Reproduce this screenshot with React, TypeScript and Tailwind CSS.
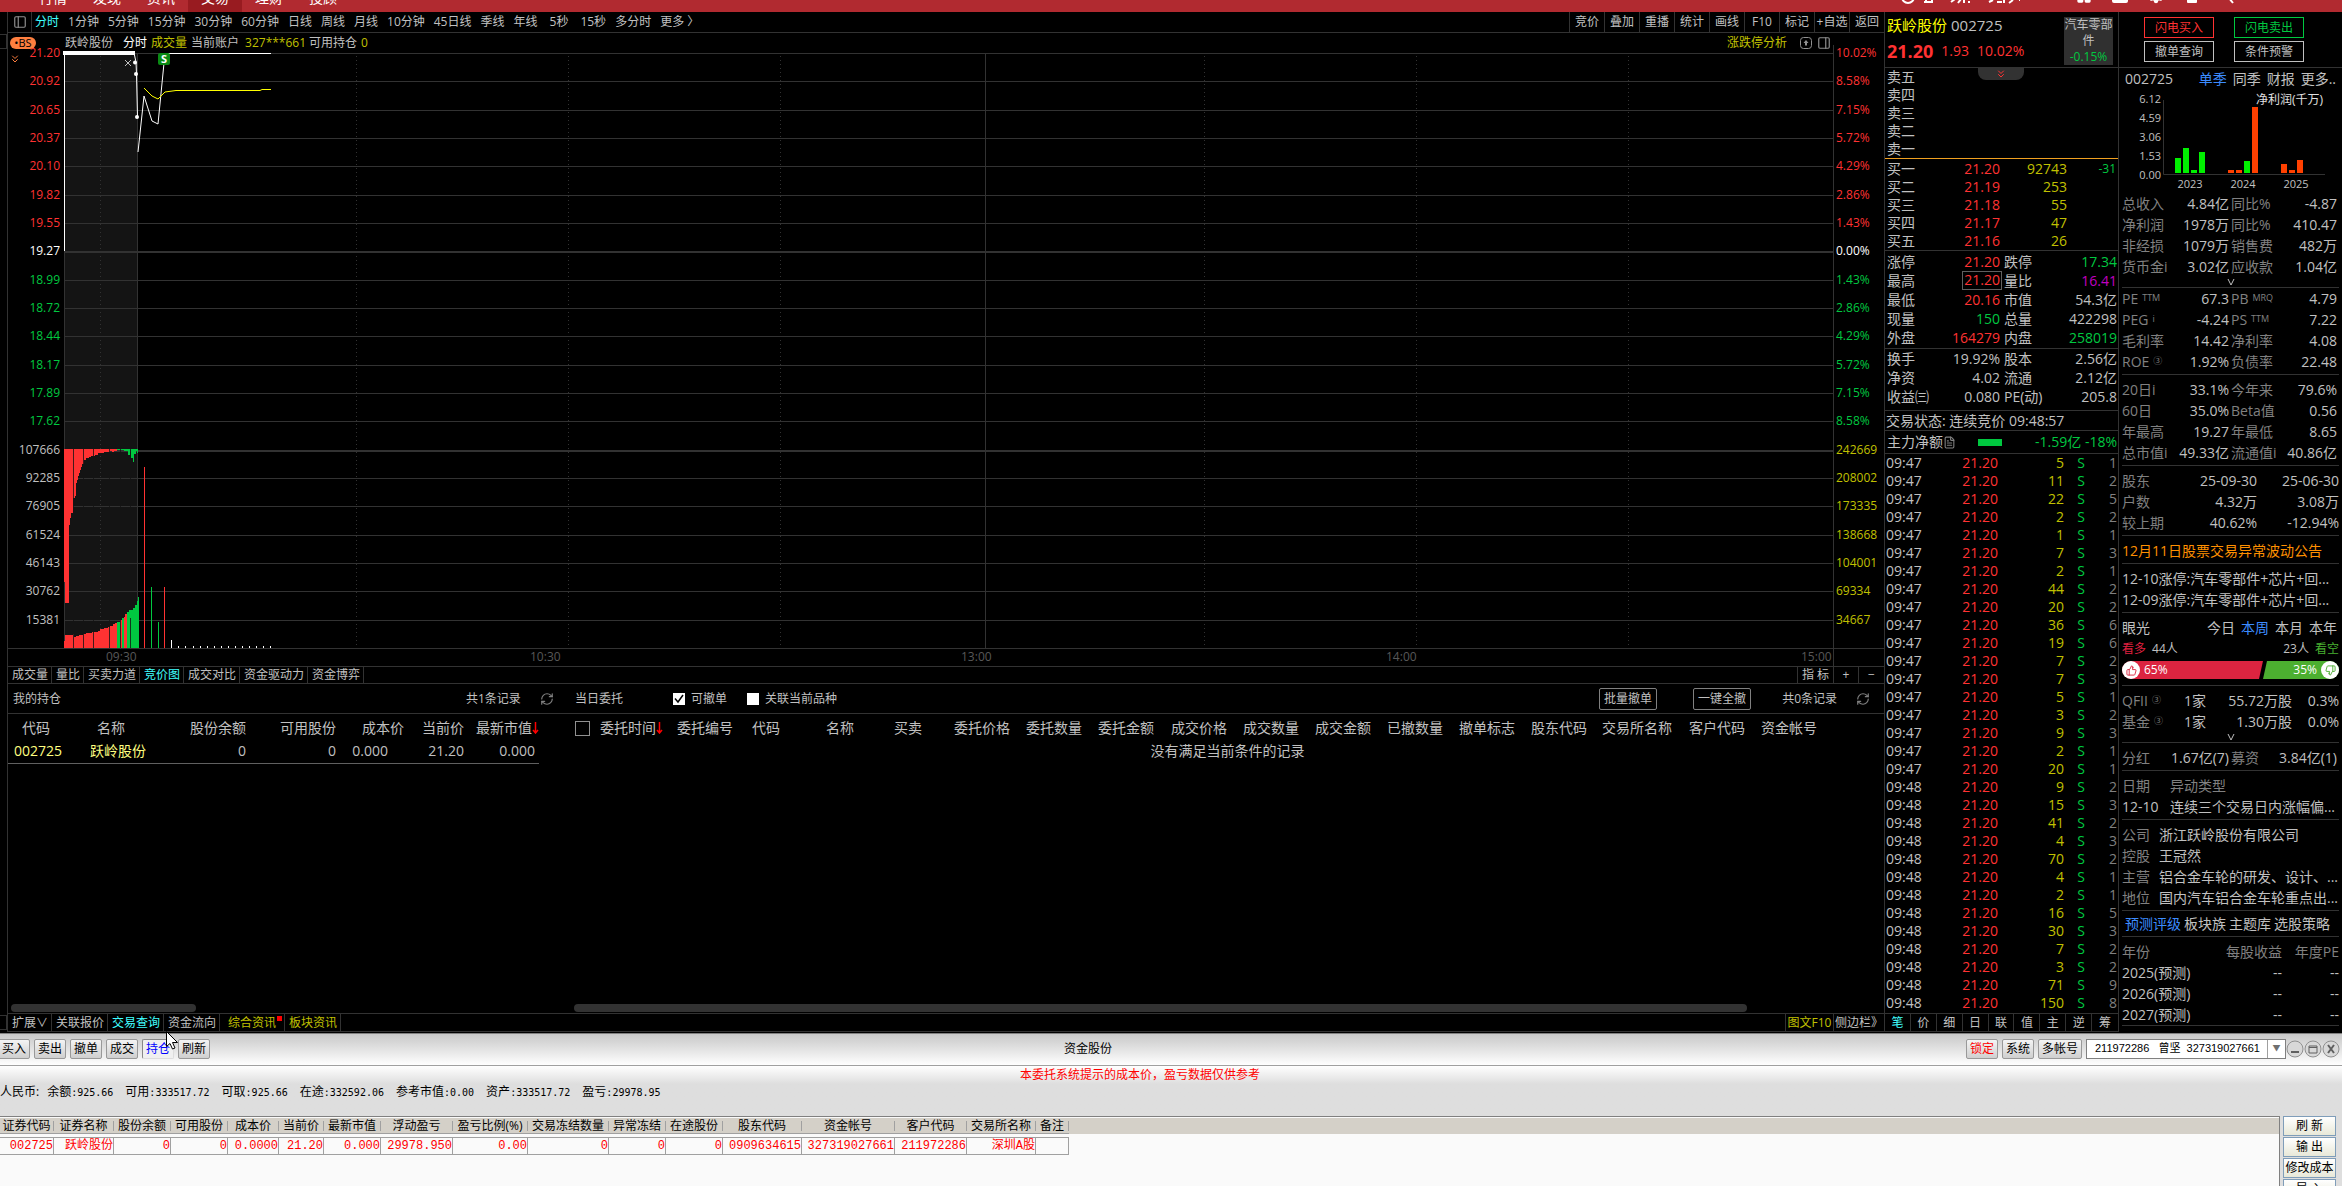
import { useState } from 'react';
import type { ReactNode } from 'react';
import { ChevronsDown, RefreshCw, ThumbsDown, ThumbsUp, LayoutGrid, Settings, PanelLeft, PanelRight, FileText } from 'lucide-react';
import { cva } from 'class-variance-authority';
import clsx from 'clsx';

const RED = '#ff3232';
const GREEN = '#00c840';

const tone = cva('', {
  variants: {
    c: {
      red: 'text-[#ff3232]',
      green: 'text-[#00c840]',
      yellow: 'text-[#c0c000]',
      purple: 'text-[#c000c0]',
      white: 'text-white',
      grey: 'text-[#808080]',
      plain: 'text-[#c0c0c0]',
    },
  },
});
type Tone = 'red' | 'green' | 'yellow' | 'purple' | 'white' | 'grey' | 'plain';

const menus = ['行情', '发现', '资讯', '交易', '理财', '投顾'];
const periods = ['分时', '1分钟', '5分钟', '15分钟', '30分钟', '60分钟', '日线', '周线', '月线', '10分钟', '45日线', '季线', '年线', '5秒', '15秒', '多分时', '更多 〉'];
const tools = ['竞价', '叠加', '重播', '统计', '画线', 'F10', '标记', '+自选', '返回'];

const priceAxis = ['21.20', '20.92', '20.65', '20.37', '20.10', '19.82', '19.55', '19.27', '18.99', '18.72', '18.44', '18.17', '17.89', '17.62'];
const auctionAxis = ['107666', '92285', '76905', '61524', '46143', '30762', '15381', ''];
const percentAxis = ['10.02%', '8.58%', '7.15%', '5.72%', '4.29%', '2.86%', '1.43%', '0.00%', '1.43%', '2.86%', '4.29%', '5.72%', '7.15%', '8.58%'];
const volumeAxis = ['242669', '208002', '173335', '138668', '104001', '69334', '34667', ''];

const bids = [
  ['买一', '21.20', '92743', '-31'],
  ['买二', '21.19', '253', ''],
  ['买三', '21.18', '55', ''],
  ['买四', '21.17', '47', ''],
  ['买五', '21.16', '26', ''],
];

type Pair = [string, string, Tone, string, string, Tone];
const quoteStats: Pair[] = [
  ['涨停', '21.20', 'red', '跌停', '17.34', 'green'],
  ['最高', '21.20', 'red', '量比', '16.41', 'purple'],
  ['最低', '20.16', 'red', '市值', '54.3亿', 'plain'],
  ['现量', '150', 'green', '总量', '422298', 'plain'],
  ['外盘', '164279', 'red', '内盘', '258019', 'green'],
];
const quoteStats2: Pair[] = [
  ['换手', '19.92%', 'plain', '股本', '2.56亿', 'plain'],
  ['净资', '4.02', 'plain', '流通', '2.12亿', 'plain'],
  ['收益㈢', '0.080', 'plain', 'PE(动)', '205.8', 'plain'],
];

const ticks: [number, number][] = [
  [5, 1], [11, 2], [22, 5], [2, 2], [1, 1], [7, 3], [2, 1], [44, 2], [20, 2], [36, 6], [19, 6], [7, 2], [7, 3], [5, 1], [3, 2], [9, 3], [2, 1], [20, 1],
  [9, 2], [15, 3], [41, 2], [4, 3], [70, 2], [4, 1], [2, 1], [16, 5], [30, 3], [7, 2], [3, 2], [71, 9], [150, 8],
];

const finance1 = [
  ['总收入', '4.84亿', '同比%', '-4.87'],
  ['净利润', '1978万', '同比%', '410.47'],
  ['非经损', '1079万', '销售费', '482万'],
  ['货币金i', '3.02亿', '应收款', '1.04亿'],
];
const finance2: [string, string, string, string, string, string][] = [
  ['PE', 'TTM', '67.3', 'PB', 'MRQ', '4.79'],
  ['PEG', 'i', '-4.24', 'PS', 'TTM', '7.22'],
  ['毛利率', '', '14.42', '净利率', '', '4.08'],
  ['ROE', '③', '1.92%', '负债率', '', '22.48'],
];
const finance3 = [
  ['20日i', '33.1%', '今年来', '79.6%'],
  ['60日', '35.0%', 'Beta值', '0.56'],
  ['年最高', '19.27', '年最低', '8.65'],
  ['总市值i', '49.33亿', '流通值i', '40.86亿'],
];
const company = [
  ['公司', '浙江跃岭股份有限公司'],
  ['控股', '王冠然'],
  ['主营', '铝合金车轮的研发、设计、...'],
  ['地位', '国内汽车铝合金车轮重点出...'],
];

const orderColumns: [string, number][] = [
  ['委托时间', 77], ['委托编号', 75], ['代码', 74], ['名称', 68], ['买卖', 60], ['委托价格', 72], ['委托数量', 72], ['委托金额', 73], ['成交价格', 72],
  ['成交数量', 72], ['成交金额', 72], ['已撤数量', 72], ['撤单标志', 72], ['股东代码', 71], ['交易所名称', 87], ['客户代码', 72], ['资金帐号', 72],
];

const positionColumns: [string, string, number][] = [
  ['证券代码', '002725', 54], ['证券名称', '跃岭股份', 60], ['股份余额', '0', 57], ['可用股份', '0', 57], ['成本价', '0.0000', 51], ['当前价', '21.20', 45],
  ['最新市值', '0.000', 57], ['浮动盈亏', '29978.950', 72], ['盈亏比例(%)', '0.00', 75], ['交易冻结数量', '0', 81], ['异常冻结', '0', 57], ['在途股份', '0', 57],
  ['股东代码', '0909634615', 79], ['资金帐号', '327319027661', 93], ['客户代码', '211972286', 72], ['交易所名称', '深圳A股', 69], ['备注', '', 33],
];

const funds = [
  ['余额', '925.66'], ['可用', '333517.72'], ['可取', '925.66'], ['在途', '332592.06'], ['参考市值', '0.00'], ['资产', '333517.72'], ['盈亏', '29978.95'],
];

/* ---------- intraday chart ---------- */

// [from x, length] steps of the unmatched auction volume, hanging from the middle line
const unmatched: [number, number][] = [
  [0, 133], [1, 154], [5, 76], [6, 69], [7, 64], [9, 49], [11, 47], [12, 34], [13, 31], [14, 27], [15, 24], [16, 21], [17, 18], [18, 15], [20, 11],
  [22, 9], [25, 8], [27, 7], [31, 6], [34, 4], [40, 3], [46, 2], [48, 3], [50, 2], [53, 1], [60, 2], [64, 6], [66, 1], [67, 9], [69, 13], [70, 5], [72, 2], [73, 4], [74, 0],
];
const matched: [number, number][] = [
  [0, 7], [1, 13], [9, 14], [10, 11], [12, 12], [15, 13], [19, 14], [22, 15], [28, 16], [34, 17], [36, 19], [40, 20], [44, 21], [46, 22], [49, 24],
  [51, 25], [53, 26], [56, 28], [58, 30], [60, 31], [62, 34], [63, 36], [65, 38], [69, 40], [71, 43], [73, 47], [74, 51], [75, 0],
];
const minuteVolume: [number, number, string][] = [
  [81, 181, RED], [88, 61, GREEN], [95, 26, GREEN], [101, 61, RED], [108, 8, '#fff'],
];
const tinyVolume = [115, 122, 130, 137, 144, 151, 158, 165, 172, 179, 186, 193, 200, 207];

const IntradayChart = () => (
  <svg viewBox="0 0 1769 595" preserveAspectRatio="none" className="block h-full w-full overflow-visible" shapeRendering="crispEdges" role="img" aria-label="分时走势">
    <rect x="0" y="0" width="74" height="595" fill="#141414" />
    {Array.from({ length: 22 }, (_, i) => (
      <rect key={i} x="0" y={Math.round((i * 595) / 21)} width="1769" height={i === 7 || i === 14 ? 2 : 1} fill="#323232" />
    ))}
    {[36, 292, 504, 716, 1140, 1352, 1564].map((x) => (
      <line key={x} x1={x + 0.5} x2={x + 0.5} y1="3" y2="595" stroke="#323232" strokeDasharray="1 3" />
    ))}
    <rect x="0" y="0" width="1" height="595" fill="#323232" />
    <rect x="73" y="0" width="1" height="595" fill="#323232" />
    <rect x="921" y="0" width="1" height="595" fill="#323232" />

    {unmatched.slice(0, -1).map(([x, h], i) => (
      <rect key={x} x={x} y="396" width={unmatched[i + 1][0] - x} height={h} fill={x >= 60 || x === 53 ? GREEN : RED} />
    ))}
    {matched.slice(0, -1).map(([x, h], i) => (
      <rect key={x} x={x} y={595 - h} width={matched[i + 1][0] - x} height={h} fill={x >= 63 || x === 53 || x === 58 ? GREEN : RED} />
    ))}
    <rect x="61" y="561" width="2" height="34" fill={RED} />
    {[9, 19, 29, 45, 56, 66].map((x) => (
      <g key={x} fill="#141414">
        <rect x={x} y="396" width="1" height="60" fillOpacity="0.8" />
        <rect x={x} y="565" width="1" height="30" fillOpacity="0.8" />
      </g>
    ))}

    {minuteVolume.map(([x, h, fill]) => (
      <rect key={x} x={x - 1} y={595 - h} width="1" height={h} fill={fill} />
    ))}
    {tinyVolume.map((x) => (
      <rect key={x} x={x - 1} y="593" width="1" height="2" fill="#fff" />
    ))}

    <rect x="0" y="0" width="1" height="198" fill="#fff" />
    <rect x="-1" y="-2" width="72" height="4" fill="#fff" />
    <g shapeRendering="auto">
      <polyline points="70,0 72,9 72.500,21 73.500,64" fill="none" stroke="#fff" />
      <circle cx="71" cy="9.500" r="2" fill="#fff" />
      <circle cx="72" cy="21" r="2" fill="#fff" />
      <circle cx="73" cy="64" r="2" fill="#fff" />
      <path d="M61 7l6 6M67 7l-6 6" stroke="#c0c0c0" fill="none" />
      <polyline points="74,99 80,43 88,68 94,71 100,10 103,0.500 207,0.500" fill="none" stroke="#fff" />
      <polyline points="80,35 88,43 94,46 101,39 112,37.500 196,37.500 198,36.500 207,36.500" fill="none" stroke="#ff0" />
      <rect x="94" y="0" width="12" height="12" rx="2" fill="#0a8a14" />
      <text x="100" y="10" textAnchor="middle" className="fill-white font-bold text-[11px]">S</text>
    </g>
  </svg>
);

const AxisLabels = ({ labels, side }: { labels: string[]; side: 'left' | 'right' }) => (
  <div className={clsx('-my-2 flex flex-col justify-between leading-4', side === 'left' ? 'w-14 pr-1 text-right' : 'w-[51px] border-l border-[#323232] pl-[2px]')}>
    {labels.map((label, i) => (
      <span
        key={i}
        className={clsx('h-4', i < 7 ? 'text-[#ff3232]' : i === 7 ? 'text-white' : i < 14 ? 'text-[#00c840]' : side === 'left' ? 'text-[#c0c0c0]' : 'text-[#c0c000]')}
      >
        {label}
      </span>
    ))}
  </div>
);

/* ---------- quarterly profit ---------- */

const profitBars: [number, number, string][] = [
  [56, 15, '#00f000'], [64, 25, '#00f000'], [72, 3, '#00f000'], [80, 21, '#00f000'],
  [109, 3, '#ff4000'], [117, 3, '#ff4000'], [125, 12, '#00f000'], [133, 66, '#ff4000'],
  [162, 9, '#ff4000'], [170, 3, '#ff4000'], [178, 13, '#ff4000'],
];

const ProfitChart = () => (
  <svg viewBox="0 0 223 104" className="block h-[104px] w-full text-[11px]" role="img" aria-label="净利润(千万)">
    {['6.12', '4.59', '3.06', '1.53', '0.00'].map((v, i) => (
      <text key={v} x="42" y={14 + i * 19} textAnchor="end" className="fill-[#c0c0c0]">{v}</text>
    ))}
    <path d="M44.500 11V85.500H206" fill="none" stroke="#323232" />
    <text x="204" y="15" textAnchor="end" className="fill-[#e0e0e0] text-xs">净利润(千万)</text>
    {profitBars.map(([x, h, fill]) => (
      <rect key={x} x={x} y={84 - h} width="6" height={h} fill={fill} />
    ))}
    {['2023', '2024', '2025'].map((v, i) => (
      <text key={v} x={71 + i * 53} y="99" textAnchor="middle" className="fill-[#c0c0c0]">{v}</text>
    ))}
  </svg>
);

/* ---------- small building blocks ---------- */

const Section = ({ children, className }: { children: ReactNode; className?: string }) => (
  <section className={clsx('mx-[3px] border-b border-[#323232] pt-1 pb-0.5 *:h-[21px]', className)}>{children}</section>
);

const PairRow = ({ pair, boxed }: { pair: Pair; boxed?: boolean }) => (
  <div className="flex h-[19px] items-center pr-px pl-0.5 leading-[19px]">
    <div className="flex w-[113px] justify-between">
      <span>{pair[0]}</span>
      <span className={clsx(tone({ c: pair[2] }), boxed && '-mr-0.5 border border-[#606060] px-px leading-4')}>{pair[1]}</span>
    </div>
    <div className="ml-1 flex flex-1 justify-between">
      <span>{pair[3]}</span>
      <span className={tone({ c: pair[5] })}>{pair[4]}</span>
    </div>
  </div>
);

const FinanceRow = ({ a, av, b, bv }: { a: ReactNode; av: string; b: ReactNode; bv: string }) => (
  <div className="flex items-center pr-0.5">
    <div className="flex w-[107px] justify-between"><span className="text-[#808080]">{a}</span><span>{av}</span></div>
    <div className="ml-0.5 flex flex-1 justify-between"><span className="text-[#808080]">{b}</span><span>{bv}</span></div>
  </div>
);

const Expand = () => (
  <button type="button" aria-label="展开" className="flex w-full items-center justify-center">
    <svg viewBox="0 0 8 8" className="size-2" fill="none" stroke="#c0c0c0"><path d="M1 1l3 6 3-6" /></svg>
  </button>
);

const Check = ({ label, checked, onChange }: { label: string; checked: boolean; onChange: (v: boolean) => void }) => (
  <label className="flex items-center gap-1.5">
    <span className="relative flex size-3 bg-white">
      <input type="checkbox" className="size-3 appearance-none" checked={checked} onChange={(e) => onChange(e.target.checked)} />
      {checked && <svg viewBox="0 0 12 12" className="pointer-events-none absolute inset-0" fill="none" stroke="#000" strokeWidth="1.500"><path d="M2 5.500l3 3.500 5-7" /></svg>}
    </span>
    {label}
  </label>
);

const SortArrow = () => (
  <svg viewBox="0 0 7 12" className="inline-block h-3 w-[7px] align-[-1px]" fill="none" stroke="#f00" strokeWidth="1.500"><path d="M3.500 0v11M1 8l2.500 3L6 8" /></svg>
);

const GreyButton = ({ children, className, active }: { children: ReactNode; className?: string; active?: boolean }) => (
  <button
    type="button"
    className={clsx(
      'h-5 rounded-xs border px-[3px] leading-[18px] whitespace-nowrap',
      active ? 'border-[#888] border-r-[#ddd] border-b-[#ddd] bg-[#f0f0f0] text-[#0000ff]' : 'border-[#999] bg-gradient-to-b from-[#f4f4f4] to-[#cfcfcf]',
      className,
    )}
  >
    {children}
  </button>
);

/* ---------- page sections ---------- */

const TopBar = () => (
  <header className="flex h-3 shrink-0 justify-between overflow-hidden bg-[#b12a30] text-sm leading-5 text-white">
    <nav className="ml-[26px] flex">
      {menus.map((m) => (
        <a key={m} href="#" className={clsx('flex w-[54px] items-end justify-center pb-1', m === '交易' && 'bg-[#981b20]')}>{m}</a>
      ))}
    </nav>
    <div className="mr-[106px] flex items-end gap-5 pb-2" aria-hidden="true">
      <svg viewBox="0 0 120 16" className="h-4 w-[120px] shrink-0" fill="none" stroke="#fff" strokeWidth="2">
        <circle cx="8" cy="9" r="6" />
        <path d="M24 14h9M26 9v5M32 9v5M51 14l4-3M58 15l3-4M64 10v5M68 14h2M89 14l4-2M97 14h5M104 10v5M109 15l4-3M120 10v3" />
      </svg>
      <LayoutGrid size={16} fill="#fff" className="ml-9 shrink-0" />
      <svg viewBox="0 0 16 16" className="size-4 shrink-0" fill="#fff"><rect width="16" height="15" rx="2" /></svg>
      <Settings size={16} fill="#fff" className="shrink-0" />
      <svg viewBox="0 0 16 16" className="size-4 shrink-0" fill="#fff"><rect x="3" width="10" height="15" rx="1" /></svg>
      <svg viewBox="0 0 16 16" className="size-4 shrink-0" stroke="#fff" strokeWidth="2"><path d="M9 10l4 5" /></svg>
    </div>
  </header>
);

const PeriodBar = () => (
  <div className="flex h-[21px] items-stretch justify-between border-b border-[#323232]">
    <div className="flex items-center gap-[9px] whitespace-nowrap">
      <button type="button" aria-label="侧栏" className="flex h-full w-6 items-center justify-center border-r border-[#323232]">
        <PanelLeft size={14} strokeWidth={2} className="text-[#909090]" />
      </button>
      {periods.map((p, i) => (
        <button key={p} type="button" className={clsx('leading-5', i === 0 && '-ml-1.5 text-[#40ffff]', p === '5秒' && 'px-[3px]')}>{p}</button>
      ))}
    </div>
    <div className="flex">
      {tools.map((t) => (
        <button key={t} type="button" className="w-[35px] border-l border-[#323232] text-center whitespace-nowrap">{t}</button>
      ))}
    </div>
  </div>
);

const ChartInfo = () => (
  <div className="relative z-10 flex h-5 items-center justify-between">
    <div className="flex items-center">
      <span className="ml-0.5 flex h-3 w-[26px] items-center justify-center rounded-md bg-[#ff7f3f] text-[11px] leading-3 text-black">•BS</span>
      <span className="ml-[29px]">跃岭股份</span>
      <span className="ml-2.5 text-white">分时</span>
      <span className="ml-1 text-[#c0c000]">成交量</span>
      <span className="ml-1">当前账户</span>
      <span className="ml-1.5 text-[#c0c000]">327***661</span>
      <span className="ml-[3px]">可用持仓</span>
      <span className="ml-1 text-[#c0c000]">0</span>
    </div>
    <div className="mr-[53px] flex items-center gap-1">
      <button type="button" className="mr-2 text-[#c0c000]">涨跌停分析</button>
      <svg viewBox="0 0 14 14" className="size-3.5" fill="none" stroke="#909090"><rect x="1.500" y="1.500" width="11" height="11" rx="3" /><path d="M7 4l2.500 3h-1.500v2.500h-2V7h-1.500z" fill="#909090" stroke="none" /></svg>
      <PanelRight size={14} className="text-[#909090]" />
    </div>
  </div>
);

const Orders = () => {
  const [cancellable, setCancellable] = useState(true);
  const [linked, setLinked] = useState(false);

  return (
    <>
      <div className="flex h-[30px] items-center border-b border-[#323232]">
        <span className="ml-[5px] w-[453px]">我的持仓</span>
        <span>共1条记录</span>
        <button type="button" aria-label="刷新持仓" className="ml-[19px]"><RefreshCw size={14} className="text-[#808080]" /></button>
        <span className="ml-[21px] w-[98px]">当日委托</span>
        <Check label="可撤单" checked={cancellable} onChange={setCancellable} />
        <span className="w-5" />
        <Check label="关联当前品种" checked={linked} onChange={setLinked} />
        <div className="ml-auto flex items-center pr-3.5">
          <button type="button" className="h-[22px] w-[58px] rounded-xs border border-[#808080]">批量撤单</button>
          <button type="button" className="ml-9 h-[22px] w-[58px] rounded-xs border border-[#808080]">一键全撤</button>
          <span className="mr-[19px] ml-[31px]">共0条记录</span>
          <button type="button" aria-label="刷新委托"><RefreshCw size={14} className="text-[#808080]" /></button>
        </div>
      </div>
      <div className="flex flex-1 pt-[3px] text-sm">
        <div className="flex w-[566px] shrink-0 flex-col justify-between">
          <table className="w-[531px] table-fixed border-b border-[#606060] text-right whitespace-nowrap">
            <colgroup>
              <col className="w-[72px]" /><col className="w-20" /><col className="w-[86px]" /><col className="w-[90px]" />
              <col className="w-[68px]" /><col className="w-[60px]" /><col className="w-[75px]" />
            </colgroup>
            <thead>
              <tr className="h-[22px] *:font-normal">
                <th className="pl-3.5 text-left">代码</th><th className="pl-[17px] text-left">名称</th><th>股份余额</th><th>可用股份</th><th>成本价</th><th>当前价</th>
                <th>最新市值<SortArrow /></th>
              </tr>
            </thead>
            <tbody>
              <tr className="h-6">
                <td className="pl-1.5 text-left text-[#ffff80]">002725</td><td className="pl-2.5 text-left text-[#ffff80]">跃岭股份</td><td>0</td><td>0</td>
                <td className="pr-4">0.000</td><td>21.20</td><td className="pr-1">0.000</td>
              </tr>
            </tbody>
          </table>
          <div className="mb-px ml-[3px] h-2 w-[185px] rounded-full bg-[#323232]" />
        </div>
        <div className="flex min-w-0 flex-1 flex-col justify-between overflow-hidden">
          <table className="w-[1259px] table-fixed whitespace-nowrap">
            <thead>
              <tr className="h-[22px] *:p-0 *:text-left *:font-normal">
                <th className="w-[26px]"><input type="checkbox" aria-label="全选" className="ml-px block size-[15px] appearance-none border border-[#909090]" /></th>
                {orderColumns.map(([name, w], i) => (
                  <th key={name} style={{ width: w }}>{name}{i === 0 && <SortArrow />}</th>
                ))}
              </tr>
            </thead>
            <tbody>
              <tr className="h-6"><td colSpan={18} className="pl-12 text-center">没有满足当前条件的记录</td></tr>
            </tbody>
          </table>
          <div className="mr-[137px] mb-px h-2 rounded-full bg-[#323232]" />
        </div>
      </div>
    </>
  );
};

const Workspace = () => (
  <main className="flex min-w-0 flex-1 flex-col">
    <PeriodBar />
    <ChartInfo />
    <div className="relative flex h-[595px]">
      <ChevronsDown size={12} className="absolute top-0 left-px text-[#ff7f3f]" />
      <AxisLabels side="left" labels={[...priceAxis, ...auctionAxis]} />
      <div className="min-w-0 flex-1"><IntradayChart /></div>
      <AxisLabels side="right" labels={[...percentAxis, ...volumeAxis]} />
    </div>
    <div className="flex h-[18px] border-t border-[#323232] leading-4 text-[#585858]">
      <div className="ml-[98px] grid flex-1 grid-cols-[424fr_431fr_425fr_415fr_31px]">
        {['09:30', '10:30', '13:00', '14:00', '15:00'].map((t) => <span key={t}>{t}</span>)}
      </div>
      <div className="ml-px w-[51px] border-l border-[#323232]" />
    </div>
    <div className="flex h-[18px] justify-between border-y border-[#323232] leading-4 *:flex">
      <div>
        {['成交量', '量比', '买卖力道', '竞价图', '成交对比', '资金驱动力', '资金博弈'].map((t) => (
          <button key={t} type="button" className={clsx('border-r border-[#323232] pr-[3px] pl-1', t === '竞价图' && 'text-[#40ffff]')}>{t}</button>
        ))}
      </div>
      <div className="text-[#c0c0c0]">
        <button type="button" className="w-9 border-l border-[#323232]">指 标</button>
        <button type="button" className="w-[25px] border-l border-[#323232]">+</button>
        <button type="button" className="w-[26px] border-l border-[#323232]">−</button>
      </div>
    </div>
    <Orders />
    <div className="flex h-[19px] justify-between border-y border-[#323232] leading-[17px] *:flex">
      <div>
        {['扩展∨', '关联报价', '交易查询', '资金流向'].map((t) => (
          <button key={t} type="button" className={clsx('border-r border-[#323232] pr-[3px] pl-1', t === '交易查询' && 'text-[#40ffff]')}>{t}</button>
        ))}
        <button type="button" className="relative border-r border-[#323232] px-2 text-[#c0c000]">
          综合资讯
          <span className="absolute top-0.5 right-0.5 size-[5px] bg-[#ff0000]" />
        </button>
        <button type="button" className="border-r border-[#323232] pr-[3px] pl-1 text-[#c0c000]">板块资讯</button>
      </div>
      <div>
        <button type="button" className="w-12 border-l border-[#323232] whitespace-nowrap text-[#c0c000]">图文F10</button>
        <button type="button" className="w-[51px] overflow-hidden border-l border-[#323232] whitespace-nowrap">侧边栏》</button>
      </div>
    </div>
  </main>
);

const QuotePanel = () => (
  <aside className="flex w-[234px] shrink-0 flex-col border-l border-[#323232] text-sm">
    <div className="flex h-14 justify-between border-b border-[#323232] pr-[5px] pl-0.5">
      <div className="whitespace-nowrap">
        <div className="flex gap-1 pt-[3px] text-[15px] leading-5"><span className="text-[#ffff00]">跃岭股份</span><span>002725</span></div>
        <div className="flex items-center gap-2 pt-1 text-[#ff3232]"><b className="text-lg leading-6">21.20</b><span>1.93</span><span>10.02%</span></div>
      </div>
      <a href="#" className="mt-[5px] h-12 w-[49px] bg-[#303030] text-center text-xs leading-4">汽车零部件<span className="block text-[#00c840]">-0.15%</span></a>
    </div>
    <div className="relative border-b border-[#f0a020] pl-0.5 leading-[18px]">
      {['卖五', '卖四', '卖三', '卖二', '卖一'].map((s) => <div key={s}>{s}</div>)}
      <button type="button" aria-label="展开盘口" className="absolute top-0 left-[93px] flex h-3 w-[46px] items-center justify-center rounded-b-lg bg-[#323232]">
        <ChevronsDown size={12} className="text-[#ff3232]" />
      </button>
    </div>
    <div className="border-b border-[#323232] pt-px">
      <table className="w-full table-fixed text-right leading-[18px]">
        <colgroup><col className="w-[50px]" /><col className="w-[65px]" /><col className="w-[67px]" /><col /></colgroup>
        <tbody>
          {bids.map((b) => (
            <tr key={b[0]} className="h-[18px]">
              <td className="pl-0.5 text-left">{b[0]}</td>
              <td className="text-[#ff3232]">{b[1]}</td>
              <td className="text-[#c0c000]">{b[2]}</td>
              <td className="pr-0.5 text-xs leading-[18px] text-[#00c840]">{b[3]}</td>
            </tr>
          ))}
        </tbody>
      </table>
    </div>
    <div className="border-b border-[#323232] py-px">{quoteStats.map((p) => <PairRow key={p[0]} pair={p} boxed={p[0] === '最高'} />)}</div>
    <div className="border-b border-[#323232] pb-1">{quoteStats2.map((p) => <PairRow key={p[0]} pair={p} />)}</div>
    <div className="h-5 border-b border-[#323232] pl-px leading-[19px]">交易状态: 连续竞价 09:48:57</div>
    <div className="flex h-[23px] items-center border-b border-[#323232] pr-px pl-0.5">
      主力净额<FileText size={13} className="text-[#808080]" />
      <span className="ml-[22px] h-[7px] w-6 bg-[#00c840]" />
      <span className="ml-auto text-[#00c840]">-1.59亿 -18%</span>
    </div>
    <table className="mb-px w-full table-fixed text-right">
      <colgroup><col className="w-[50px]" /><col className="w-[63px]" /><col className="w-[66px]" /><col className="w-[21px]" /><col /></colgroup>
      <tbody>
        {ticks.map(([vol, count], i) => (
          <tr key={i} className="h-[18px] leading-[18px]">
            <td className="pl-px text-left">{i < 18 ? '09:47' : '09:48'}</td>
            <td className="text-[#ff3232]">21.20</td>
            <td className="text-[#c0c000]">{vol}</td>
            <td className="text-[#00c840]">S</td>
            <td className="pr-px text-[#808080]">{count}</td>
          </tr>
        ))}
      </tbody>
    </table>
    <div className="mt-auto grid h-[19px] grid-cols-9 border-y border-[#323232] text-xs leading-[17px]">
      {['笔', '价', '细', '日', '联', '值', '主', '逆', '筹'].map((t, i) => (
        <button key={t} type="button" className={clsx('border-r border-[#323232]', i === 0 && 'text-[#40ffff]', i === 8 && 'border-r-0')}>{t}</button>
      ))}
    </div>
  </aside>
);

const Mark = ({ label, sup }: { label: string; sup: string }) => (
  <>{label}{sup && <span className="ml-1 align-[3px] text-[9px] leading-none">{sup}</span>}</>
);

const InfoPanel = () => (
  <aside className="w-[224px] shrink-0 border-l border-[#323232] text-sm leading-[21px] whitespace-nowrap">
    <div className="grid h-14 grid-cols-2 gap-x-5 gap-y-[3px] border-b border-[#323232] pt-[5px] pr-[38px] pb-[5px] pl-[25px] text-xs leading-[18px]">
      <button type="button" className="border border-[#ff3232] text-[#ff3232]">闪电买入</button>
      <button type="button" className="border border-[#00c840] text-[#00c840]">闪电卖出</button>
      <button type="button" className="border border-[#c0c0c0]">撤单查询</button>
      <button type="button" className="border border-[#c0c0c0]">条件预警</button>
    </div>
    <div className="flex h-[21px] items-center gap-1.5 pl-1.5">
      <span className="mr-auto">002725</span>
      <button type="button" className="text-[#3c8cff]">单季</button>
      <button type="button">同季</button>
      <button type="button">财报</button>
      <button type="button" className="mr-1.5">更多..</button>
    </div>
    <ProfitChart />
    <div className="mx-[3px] border-b border-[#323232] *:h-[21px]">
      {finance1.map((r) => <FinanceRow key={r[0]} a={r[0]} av={r[1]} b={r[2]} bv={r[3]} />)}
      <div className="!h-2.5 *:h-full"><Expand /></div>
    </div>
    <Section className="!pt-0">
      {finance2.map((r) => <FinanceRow key={r[0]} a={<Mark label={r[0]} sup={r[1]} />} av={r[2]} b={<Mark label={r[3]} sup={r[4]} />} bv={r[5]} />)}
    </Section>
    <Section>{finance3.map((r) => <FinanceRow key={r[0]} a={r[0]} av={r[1]} b={r[2]} bv={r[3]} />)}</Section>
    <Section>
      {[['股东', '25-09-30', '25-06-30'], ['户数', '4.32万', '3.08万'], ['较上期', '40.62%', '-12.94%']].map((r) => (
        <div key={r[0]} className="flex">
          <span className="text-[#808080]">{r[0]}</span>
          <span className="ml-auto">{r[1]}</span>
          <span className="w-[82px] text-right">{r[2]}</span>
        </div>
      ))}
    </Section>
    <Section><a href="#" className="block text-[#ff9000]">12月11日股票交易异常波动公告</a></Section>
    <Section>
      <a href="#" className="block">12-10涨停:汽车零部件+芯片+回...</a>
      <a href="#" className="block">12-09涨停:汽车零部件+芯片+回...</a>
    </Section>
    <Section className="!pb-1.5">
      <div className="flex gap-1.5 pr-0.5">
        <span className="mr-auto">眼光</span>
        <button type="button">今日</button>
        <button type="button" className="text-[#3c8cff]">本周</button>
        <button type="button">本月</button>
        <button type="button">本年</button>
      </div>
      <div className="flex gap-1.5 text-xs leading-[21px]">
        <span className="text-[#e02040]">看多</span><span className="mr-auto">44人</span><span>23人</span><span className="text-[#48b030]">看空</span>
      </div>
      <div className="mt-0.5 flex !h-[18px] text-xs leading-[18px] text-white">
        <div className="flex w-[141px] items-center gap-1 rounded-l-full bg-[#dc2440] [clip-path:polygon(0_0,100%_0,calc(100%-4px)_100%,0_100%)]">
          <span className="flex size-[18px] items-center justify-center rounded-full bg-white"><ThumbsUp size={11} className="text-[#dc2440]" /></span>65%
        </div>
        <div className="flex flex-1 items-center justify-end gap-1 rounded-r-full bg-[#4caf30] [clip-path:polygon(4px_0,100%_0,100%_100%,0_100%)]">
          35%<span className="flex size-[18px] items-center justify-center rounded-full bg-white"><ThumbsDown size={11} className="text-[#4caf30]" /></span>
        </div>
      </div>
    </Section>
    <Section className="!pb-0">
      {[['QFII', '1家', '55.72万股', '0.3%'], ['基金', '1家', '1.30万股', '0.0%']].map((r) => (
        <div key={r[0]} className="flex">
          <span className="w-[62px] text-[#808080]"><Mark label={r[0]} sup="③" /></span>
          <span>{r[1]}</span>
          <span className="ml-auto">{r[2]}</span>
          <span className="w-[47px] text-right">{r[3]}</span>
        </div>
      ))}
      <div className="!h-2.5 *:h-full"><Expand /></div>
    </Section>
    <Section><FinanceRow a="分红" av="1.67亿(7)" b="募资" bv="3.84亿(1)" /></Section>
    <Section>
      <div className="flex text-[#808080]"><span className="w-12">日期</span><span>异动类型</span></div>
      <div className="flex"><span className="w-12">12-10</span><a href="#">连续三个交易日内涨幅偏...</a></div>
    </Section>
    <Section>
      {company.map(([k, v]) => (
        <div key={k} className="flex"><span className="w-[37px] text-[#808080]">{k}</span><span>{v}</span></div>
      ))}
    </Section>
    <Section className="!pt-0.5">
      <div className="flex gap-[3px] pl-[3px]">
        <button type="button" className="text-[#3c8cff]">预测评级</button>
        <button type="button">板块族</button>
        <button type="button">主题库</button>
        <button type="button">选股策略</button>
      </div>
    </Section>
    <Section className="*:!h-auto !pb-0">
      <table className="w-full text-right *:*:h-[21px]">
        <thead>
          <tr className="text-[#808080] *:font-normal"><th className="text-left">年份</th><th>每股收益</th><th>年度PE</th></tr>
        </thead>
        <tbody>
          {['2025(预测)', '2026(预测)', '2027(预测)'].map((y) => (
            <tr key={y}><td className="text-left">{y}</td><td>--</td><td>--</td></tr>
          ))}
        </tbody>
      </table>
    </Section>
  </aside>
);

const TradeWindow = () => (
  <section className="flex min-h-0 flex-1 flex-col overflow-hidden border-t border-[#808080] bg-[#dedede] text-xs text-black">
    <div className="flex h-8 shrink-0 items-center border-b border-[#a0a0a0] bg-gradient-to-b from-[#c8c8c8] to-white pr-0.5 pb-0.5">
      <div className="-ml-0.5 flex gap-1">
        {['买入', '卖出', '撤单', '成交', '持仓', '刷新'].map((b) => <GreyButton key={b} active={b === '持仓'}>{b}</GreyButton>)}
      </div>
      <h1 className="flex-1 text-center">资金股份</h1>
      <div className="flex items-center gap-1">
        <GreyButton className="text-[#ff0000]">锁定</GreyButton>
        <GreyButton>系统</GreyButton>
        <GreyButton>多帐号</GreyButton>
        <div className="relative">
          <select aria-label="资金帐号" className="h-5 w-[200px] appearance-none border border-[#808080] bg-white pl-2 font-['Liberation_Sans','Noto_Sans_CJK_SC',sans-serif] text-[11px]">
            <option>211972286 &nbsp; 曾坚 &nbsp;327319027661</option>
          </select>
          <span className="pointer-events-none absolute top-px right-px flex h-[18px] w-[18px] items-center justify-center border-l border-[#a0a0a0] text-[8px] text-[#707070]">▼</span>
        </div>
        <div className="-ml-1 flex">
          {[['最小化', 'M5 12h8'], ['还原', 'M5 6h8v7H5zM5 7.500h8'], ['关闭', 'M6 5l6 8M12 5l-6 8']].map(([name, d]) => (
            <button key={name} type="button" aria-label={name}>
              <svg viewBox="0 0 18 18" className="size-[18px]" fill="none"><circle cx="9" cy="9" r="8" fill="#d8d8d8" stroke="#909090" /><path d={d} stroke="#606060" strokeWidth={name === '还原' ? 1 : 2} /></svg>
            </button>
          ))}
        </div>
      </div>
    </div>
    <div className="flex min-h-0 flex-1 bg-gradient-to-b from-white to-[#dedede] to-15%">
      <div className="flex min-w-0 flex-1 flex-col">
        <p className="h-[18px] shrink-0 text-center leading-[18px] text-[#ff0000]">本委托系统提示的成本价，盈亏数据仅供参考</p>
        <div className="flex h-8 shrink-0 items-start gap-3 leading-4">
          <span>人民币:</span>
          {funds.map(([k, v], i) => (
            <span key={k} className={clsx(i === 0 && '-ml-1')}>{k}<span className="font-['DejaVu_Sans_Mono',monospace] text-[10px]">:{v}</span></span>
          ))}
        </div>
        <div className="min-h-0 flex-1 border-t border-r border-[#808080] bg-[#fafafa] pt-px">
          <div className="h-4 bg-[#d4d0c8]">
            <table className="w-[1069px] table-fixed border-separate border-spacing-0 whitespace-nowrap">
              <thead>
                <tr className="h-4">
                  {positionColumns.map(([name, , w]) => (
                    <th key={name} style={{ width: w }} className="border-b border-[#a0a0a0] bg-[#d4d0c8] p-0 leading-[15px] font-normal">
                      <div className="flex items-center justify-center"><span className="-mx-2 flex-1 text-center">{name}</span><i className="h-2.5 w-px bg-[#a0a0a0]" /></div>
                    </th>
                  ))}
                </tr>
              </thead>
              <tbody className="font-['Liberation_Mono','Noto_Sans_CJK_SC',monospace] text-[#ff0000]">
                <tr aria-hidden="true"><td colSpan={17} className="h-[3px] bg-[#fafafa] p-0" /></tr>
                <tr>
                  {positionColumns.map(([name, value]) => (
                    <td key={name} className="h-[18px] border-y border-r border-[#a0a0a0] bg-[#fafafa] p-0 text-right leading-4">{value}</td>
                  ))}
                </tr>
              </tbody>
            </table>
          </div>
        </div>
      </div>
      <div className="flex w-[62px] shrink-0 flex-col gap-px pt-[50px] pl-[3px]">
        {['刷 新', '输 出', '修改成本', '导 入'].map((b) => (
          <button key={b} type="button" className="h-5 w-[53px] shrink-0 border border-[#7f9db9] bg-gradient-to-b from-white to-[#e8e8d8] leading-[18px] whitespace-nowrap">{b}</button>
        ))}
      </div>
    </div>
  </section>
);

export default function App() {
  return (
    <div className="relative flex h-screen flex-col overflow-hidden bg-black font-['Open_Sans','Noto_Sans_CJK_SC',sans-serif] text-xs text-[#c0c0c0]">
      <TopBar />
      <div className="flex shrink-0 pb-px">
        <div className="flex w-2 shrink-0 flex-col justify-between border-r border-[#323232] pt-[22px]">
          <button type="button" aria-label="上翻" className="h-[15px] w-[7px] border border-l-0 border-[#323232]" />
          <button type="button" aria-label="下翻" className="mb-0.5 h-[15px] w-[7px] border border-l-0 border-[#323232]" />
        </div>
        <Workspace />
        <QuotePanel />
        <InfoPanel />
      </div>
      <TradeWindow />
      <svg viewBox="0 0 12 19" className="pointer-events-none absolute top-[1031px] left-[166px] h-[19px] w-3" fill="#fff" stroke="#000">
        <path d="M0.500 0.500v15l3.500-3 2.500 5.500 2.500-1-2.500-5.500h5z" />
      </svg>
    </div>
  );
}
